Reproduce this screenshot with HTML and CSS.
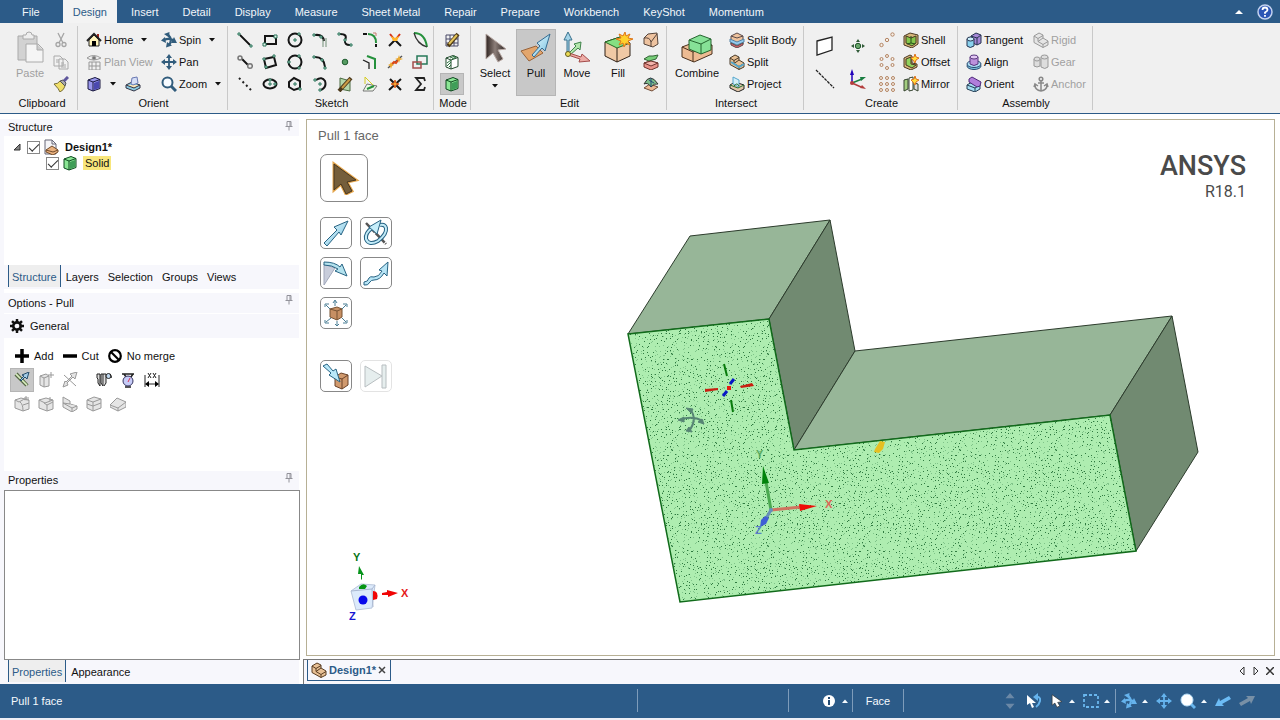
FILE: index.html
```html
<!DOCTYPE html>
<html lang="en">
<head>
<meta charset="utf-8">
<title>Design1*</title>
<link rel="stylesheet" href="styles.css">
</head>
<body>
<svg class="defs" aria-hidden="true">
  <symbol id="cube" viewBox="0 0 16 16"><path d="M2 4 9 1.500l5 2v9L7 15l-5-2z"/><path d="M2 4l5 2 7-2.500M7 6v9" fill="none"/></symbol>
  <symbol id="caret" viewBox="0 0 6 4"><path d="M0 0h6L3 3.500z"/></symbol>
  <symbol id="caret-up" viewBox="0 0 6 4"><path d="M0 4h6L3 .5z"/></symbol>
  <symbol id="pin" viewBox="0 0 8 10"><path d="M2 .5h4v5H2zM5 .5v5M.5 5.500h7M4 5.500v4" fill="none" stroke="#92929a"/></symbol>
  <symbol id="cursor" viewBox="0 0 16 20"><path d="M1 1v15l4-3 3 6 4-2-3-5 6-1z"/></symbol>
  <symbol id="spin" viewBox="0 0 16 16"><path d="M3 8q5-2.500 10 .5M7 2.500q5 5 1 11" fill="none" stroke="currentColor" stroke-width="2.200"/><path d="M0 8.500L4 5 5 11zM16 11l-6 0 3-6zM3 2L8.500 0 8 5.500zM5 15.500L6 10l5 3.500z" fill="currentColor"/></symbol>
  <symbol id="pan" viewBox="0 0 16 16"><path d="M8 2v12M2 8h12" stroke="currentColor" stroke-width="1.800"/><path d="M8 0l3 4H5zM8 16l3-4H5zM0 8l4-3v6zM16 8l-4-3v6z" fill="currentColor"/></symbol>
  <symbol id="part" viewBox="0 0 16 16"><path d="M1 4l5-3 4 2v3l5 3v4l-5 2.500-9-5z" fill="#e8c095"/><path d="M1 4l4 2.500 5-3M5 6.500v3l5 3 5-3M10 12.500v3M5 9.500l5-3.500" fill="none"/></symbol>
  <symbol id="part-plain" viewBox="0 0 16 16"><path d="M1 4l5-3 4 2v3l5 3v4l-5 2.500-9-5z"/><path d="M1 4l4 2.500 5-3M5 6.500v3l5 3 5-3M10 12.500v3M5 9.500l5-3.500" fill="none"/></symbol>
  <pattern id="stipple" width="96" height="96" patternUnits="userSpaceOnUse"><rect width="96" height="96" fill="#aeedb0"/><path id="stipple-light" fill="#7fc489" shape-rendering="crispEdges"/><path id="stipple-dark" fill="#2f7a40" shape-rendering="crispEdges"/></pattern>
  <linearGradient id="blueArrow" x1="0" y1="0" x2="1" y2="1"><stop offset="0" stop-color="#effcff"/><stop offset="1" stop-color="#70bfe0"/></linearGradient>
  <linearGradient id="darkArrow" x1="0" y1="0" x2="1" y2="0"><stop offset="0" stop-color="#302522"/><stop offset=".45" stop-color="#8b7d78"/><stop offset="1" stop-color="#29201e"/></linearGradient>
</svg>

<div class="app">
<nav class="menu" aria-label="Ribbon tabs">
  <button class="menu-file">File</button>
  <button class="menu-active">Design</button>
  <button>Insert</button><button>Detail</button><button>Display</button><button>Measure</button><button>Sheet Metal</button><button>Repair</button><button>Prepare</button><button>Workbench</button><button>KeyShot</button><button>Momentum</button>
  <div class="menu-end">
    <button class="tool" aria-label="Collapse ribbon"><svg class="i8" viewBox="0 0 8 6"><path d="M0 5 4 1l4 4z" fill="#fff"/></svg></button>
    <button class="tool" aria-label="Help"><svg class="i16" viewBox="0 0 16 16"><circle cx="8" cy="8" r="7" fill="#2b55b5" stroke="#c3d2ef" stroke-width="1.500"/><path d="M5.500 6q0-2.500 2.500-2.500T10.500 6Q10.500 7 8 8.500v1.200M8 11v1.800" fill="none" stroke="#fff" stroke-width="1.800"/></svg></button>
  </div>
</nav>

<header class="ribbon">
  <section class="group g-clipboard"><div class="cells">
    <button class="big off"><svg class="i32" viewBox="0 0 32 32"><path d="M4 5h19v24H4z" fill="#d2d2d2" stroke="#aaa"/><path d="M9 7V4h3q0-3 3-3t3 3h2v4H9z" fill="#eee" stroke="#aaa"/><path d="M12 13h12l5 5v13H12z" fill="#f5f5f5" stroke="#aaa"/><path d="M23 13v6h6" fill="#ccc" stroke="#aaa"/></svg>Paste</button>
    <button class="tool" aria-label="Cut"><svg class="i16" viewBox="0 0 16 16" fill="none" stroke="#a5a5a5" stroke-width="1.300"><path d="M5 1l5 10M11 1L6 11"/><circle cx="5" cy="12.500" r="2"/><circle cx="11" cy="12.500" r="2"/></svg></button>
    <button class="tool" aria-label="Copy"><svg class="i16" viewBox="0 0 16 16" fill="#f1f1f1" stroke="#aaa"><path d="M1 2h6l3 3v7H1zM6 5h6l3 3v7H6z"/><path d="M8 9h3M8 11h5M8 13h5M3 6h3M3 8h3"/></svg></button>
    <button class="tool" aria-label="Format painter"><svg class="i16" viewBox="0 0 16 16"><path d="M1 8q4 0 6-3l5 5q-1 4-5 6-1-3-6-8z" fill="#f0df6a" stroke="#776d38"/><path d="M7 5l3-1 3 3-1 3z" fill="#aaa" stroke="#555"/><path d="M11 5l4-4" stroke="#5f579c" stroke-width="3"/></svg></button>
  </div><h2>Clipboard</h2></section>

  <section class="group g-orient"><div class="cells">
    <button class="tool"><svg class="i16" viewBox="0 0 16 16"><path d="M11 2h2v5h-2z" fill="#9c261c"/><path d="M3 8l5-5 5 5v6H3z" fill="#fff4bb" stroke="#222"/><path d="M1 9l7-7 7 7" fill="none" stroke="#222" stroke-width="2"/><path d="M6 9h4v5H6z"/></svg>Home<svg class="caret menu-gap"><use href="#caret"/></svg></button>
    <button class="tool"><svg class="i16 navy"><use href="#spin"/></svg>Spin<svg class="caret menu-gap"><use href="#caret"/></svg></button>
    <button class="tool off"><svg class="i16" viewBox="0 0 16 16" fill="none" stroke="#999"><path d="M1 4q6-5 14 0-8 4-14 0M3 8h11v8H3zM3 12h11M6 8v8M10 8v8"/><circle cx="8" cy="4" r="1.800" fill="#777"/></svg>Plan View</button>
    <button class="tool"><svg class="i16 navy"><use href="#pan"/></svg>Pan</button>
    <div class="pair"><button class="tool" aria-label="View style"><svg class="i16 violet"><use href="#cube"/><path d="M8 7l5-2v7l-5 2z" fill="#4b49b0" stroke="none"/></svg><svg class="caret menu-gap"><use href="#caret"/></svg></button><button class="tool" aria-label="Snap view"><svg class="i16" viewBox="0 0 16 16" stroke="#334"><path d="M1 9l6-3 8 3v3l-6 3-8-3z" fill="#8bcbe2"/><path d="M1 9l8 3 6-3" fill="#fbe8b9"/><path d="M6 8l1-6 5-1 1 6-5 2z" fill="#d5def6" stroke="#6978b2"/></svg></button></div>
    <button class="tool"><svg class="i16" viewBox="0 0 16 16"><circle cx="6.500" cy="6.500" r="5" fill="#f7fbff" stroke="#315c7c" stroke-width="2"/><path d="M10 10l5 5" stroke="#315c7c" stroke-width="3"/></svg>Zoom<svg class="caret menu-gap"><use href="#caret"/></svg></button>
  </div><h2>Orient</h2></section>

  <section class="group g-sketch"><div class="cells sketch-icons">
    <button class="tool" aria-label="Line"><svg class="i16" viewBox="0 0 16 16"><path d="M3 3l10 10" stroke="#111" stroke-width="1.800"/><path class="knob" d="M1 1h2v2H1zM13 13h2v2h-2z"/></svg></button>
    <button class="tool" aria-label="Rectangle"><svg class="i16" viewBox="0 0 16 16"><path d="M3 4h11v8H3z" class="ink"/><path class="knob" d="M1 11h3v3H1zM12 3h3v3h-3z"/></svg></button>
    <button class="tool" aria-label="Circle"><svg class="i16" viewBox="0 0 16 16"><circle cx="8" cy="8" r="6.500" class="ink"/><path class="knob" d="M7 7h2v2H7zM11 1h2v2h-2z"/></svg></button>
    <button class="tool" aria-label="Tangent line"><svg class="i16" viewBox="0 0 16 16"><path class="ink" d="M3 3q8-1 9 6"/><path class="knob" d="M1 2h2v2H1zM8 4h2v2H8z"/><path d="M11 7v8M14 6v9" stroke="#739078"/></svg></button>
    <button class="tool" aria-label="Spline"><svg class="i16" viewBox="0 0 16 16"><path class="ink" d="M3 2q8 0 5 6-1 5 5 5"/><path class="knob" d="M1 1h2v2H1zM7 7h2v2H7zM13 12h2v2h-2z"/></svg></button>
    <button class="tool" aria-label="Rounded corner"><svg class="i16" viewBox="0 0 16 16"><path d="M6 2q8 0 8 9" class="green"/><path d="M1 2h4M14 12v3" class="ink"/><path d="M11 1h3v3" fill="none" stroke="#c9796a"/></svg></button>
    <button class="tool" aria-label="Trim"><svg class="i16" viewBox="0 0 16 16"><path class="ink" d="M2 14l6-6 6 6"/><path d="M3 2l4 5M13 2L9 7" stroke="#d43016" stroke-width="2"/><path d="M4 4l4 2 4-2-2 5H6z" fill="#ffb526"/></svg></button>
    <button class="tool" aria-label="Bend"><svg class="i16" viewBox="0 0 16 16"><path d="M2 1q11 0 13 14" class="green"/><path d="M2 1q3 11 13 14" fill="none" stroke="#333" stroke-width="1.300"/></svg></button>
    <button class="tool" aria-label="Construction line"><svg class="i16" viewBox="0 0 16 16"><path class="ink" d="M5 5l6 6"/><g fill="#eee" stroke="#777" stroke-width="1.500"><circle cx="3" cy="4" r="2"/><circle cx="13" cy="12" r="2.300"/></g></svg></button>
    <button class="tool" aria-label="Angled rectangle"><svg class="i16" viewBox="0 0 16 16"><path d="M2 5l10-2 2 8-10 3z" class="ink"/><path class="knob" d="M1 4h2v2H1zM11 1h2v2h-2zM3 12h2v2H3z"/></svg></button>
    <button class="tool" aria-label="Three point circle"><svg class="i16" viewBox="0 0 16 16"><circle cx="8" cy="8" r="6.500" class="ink"/><path class="knob" d="M1 7h2v2H1zM11 1h2v2h-2zM11 13h2v2h-2z"/></svg></button>
    <button class="tool" aria-label="Arc"><svg class="i16" viewBox="0 0 16 16"><path class="ink" d="M3 3q9 0 10 10"/><path class="knob" d="M1 2h2v2H1zM9 5h2v2H9zM12 13h2v2h-2z"/></svg></button>
    <button class="tool" aria-label="Point"><svg class="i16" viewBox="0 0 16 16"><circle cx="8" cy="8" r="2.800" fill="#559b62" stroke="#205c30"/></svg></button>
    <button class="tool" aria-label="Offset curve"><svg class="i16" viewBox="0 0 16 16"><path d="M5 2l8 3v10" class="green"/><path d="M1 6l6 3v6" fill="none" stroke="#222" stroke-width="1.300"/></svg></button>
    <button class="tool" aria-label="Split curve"><svg class="i16" viewBox="0 0 16 16"><path d="M1 14L15 2" stroke="#555" stroke-width="1.500"/><path d="M4 11l3-3 2 1 3-4" stroke="#e04a19" stroke-width="2" fill="none"/><path d="M12 1l1 3 3 1-3 1-1 3-1-3-3-1 3-1zM4 8l1 2 2 1-2 1-1 3-1-3-2-1 2-1z" fill="#edaa30"/></svg></button>
    <button class="tool" aria-label="Scale sketch"><svg class="i16" viewBox="0 0 16 16"><path d="M5 2h10v8H5z" fill="none" stroke="#267858" stroke-width="1.500"/><path d="M1 8h8v6H1z" fill="none" stroke="#a24e4b" stroke-width="1.500"/></svg></button>
    <button class="tool" aria-label="Dotted line"><svg class="i16" viewBox="0 0 16 16"><path d="M2 2l12 12" stroke="#222" stroke-width="2" stroke-dasharray="2 3"/></svg></button>
    <button class="tool" aria-label="Ellipse"><svg class="i16" viewBox="0 0 16 16"><ellipse class="ink" cx="8" cy="8" rx="6.500" ry="4.500"/><path class="knob" d="M7 7h2v2H7zM7 3h2v2H7zM12 7h2v2h-2z"/></svg></button>
    <button class="tool" aria-label="Polygon"><svg class="i16" viewBox="0 0 16 16"><path class="ink" d="M2 6l5-4 6 3v7l-6 2-5-3z"/><path class="knob" d="M7 7h2v2H7zM12 12h2v2h-2z"/></svg></button>
    <button class="tool" aria-label="Swept arc"><svg class="i16" viewBox="0 0 16 16"><path class="ink" d="M4 4q6-4 9 1 2 6-4 9"/><path class="knob" d="M2 3h2v2H2zM7 7h2v2H7zM7 13h2v2H7z"/></svg></button>
    <button class="tool" aria-label="Face curve"><svg class="i16" viewBox="0 0 16 16"><path d="M3 2l10 3v10L3 13z" fill="#b4d6a8" stroke="#4b6b42"/><path d="M2 15L14 2" stroke="#4c391b" stroke-width="4"/><path d="M5 12l8-9" stroke="#c99b45" stroke-width="2"/></svg></button>
    <button class="tool" aria-label="Project to sketch"><svg class="i16" viewBox="0 0 16 16"><path d="M1 15l4-7 10 2-4 5z" fill="#eef7e7" stroke="#777"/><path d="M5 13l7-3" class="green"/><path d="M3 1v7M3 1l8 8" stroke="#d5cc22" fill="none"/></svg></button>
    <button class="tool" aria-label="Intersect curve"><svg class="i16" viewBox="0 0 16 16"><path class="ink" d="M2 14L14 3M3 3l11 11"/><path d="M8 4l1 3 3 1-3 1-1 3-1-3-3-1 3-1z" fill="#f7ab31" stroke="#d95f22"/></svg></button>
    <button class="tool" aria-label="Equation"><svg class="i16" viewBox="0 0 16 16"><path d="M13 5l-1-3H4l5 6-5 6h8l1-3" fill="none" stroke="#222" stroke-width="1.800"/></svg></button>
  </div><h2>Sketch</h2></section>

  <section class="group g-mode"><div class="cells">
    <button class="tool mode" aria-label="Sketch mode"><svg class="i16" viewBox="0 0 16 16"><path d="M2 3h12v11H2zM2 7h12M2 11h12M6 3v11M10 3v11" fill="none" stroke="#484867"/><path d="M4 14L14 2" stroke="#503b15" stroke-width="4"/><path d="M5 12l8-9" stroke="#e4c45b" stroke-width="2"/></svg></button>
    <button class="tool mode" aria-label="Section mode"><svg class="i16 white"><use href="#cube"/><path d="M3 9l4-3M3 12l4-4M5 13l2-2M6 4l5-2M8 5l4-2" stroke="#27733a"/></svg></button>
    <button class="tool mode pressed" aria-label="3D mode"><svg class="i16 lime"><use href="#cube"/><path d="M8 7l5-2v7l-5 2z" fill="#3f9e58" stroke="none"/></svg></button>
  </div><h2>Mode</h2></section>

  <section class="group g-edit"><div class="cells">
    <button class="big"><svg class="i32" viewBox="0 0 32 32"><path d="M7 3v25l7-6 5 9 5-3-5-9 8-1z" fill="url(#darkArrow)" stroke="#b8a9a4"/></svg>Select<svg class="caret"><use href="#caret"/></svg></button>
    <button class="big pressed"><svg class="i32" viewBox="0 0 32 32"><path d="M1 20l15-5 7 7-14 8z" fill="#e3a66d" stroke="#98633a"/><path d="M12 24l8-9-3-3L30 3l-5 17-3-3-8 9z" fill="url(#blueArrow)" stroke="#356b91"/></svg>Pull</button>
    <button class="big"><svg class="i32" viewBox="0 0 32 32"><path d="M6 22V9H3l4-8 4 8H8v13z" fill="#a4d4e8" stroke="#3a718d"/><path d="M8 22l7-7-2-2 7-2-1 8-2-2-8 7z" fill="#b4e7ad" stroke="#40834a"/><path d="M8 22l12 4 1-3 8 7-11 1 1-3-12-4z" fill="#edaca6" stroke="#a44d4c"/><circle cx="7" cy="23" r="2.500" fill="#eddd56" stroke="#635b20"/></svg>Move</button>
    <button class="big"><svg class="i32" viewBox="0 0 32 32"><path d="M3 11l15-5 10 6v13l-13 6-12-6z" fill="#f0c9a5" stroke="#2f2117"/><path d="M3 11l15-5 10 6-13 5z" fill="#85df82" stroke="#276a27"/><path d="M15 17v14" stroke="#2f2117"/><path d="M23 1l1 4 4-2-2 4 5 1-5 2 2 4-4-2-2 4-1-4-4 2 2-4-5-2 5-1-2-4 4 2z" fill="#ffd02b" stroke="#df7518"/></svg>Fill</button>
    <div class="stack"><button class="tool" aria-label="Blend"><svg class="i16" viewBox="0 0 16 16"><path d="M1 6l4-4 9-1 1 11-5 3-9-3z" fill="#eec3a0" stroke="#55443a"/><path d="M1 6q6-1 7 4l6-8M8 10v5" fill="none" stroke="#55443a"/></svg></button><button class="tool" aria-label="Replace"><svg class="i16" viewBox="0 0 16 16"><path d="M1 9l6-2 8 2v4l-7 3-7-3z" fill="#e89189" stroke="#70342e"/><path d="M1 5l5-3h4l5-1-2 4-7 2z" fill="#76ce78" stroke="#356337"/><path d="M1 9l7 3 7-3-7-2z" fill="#f3b3ac" stroke="#70342e"/></svg></button><button class="tool" aria-label="Tweak"><svg class="i16" viewBox="0 0 16 16"><path d="M1 12l6-4 8 3-6 4z" fill="#eeb995" stroke="#704d38"/><path d="M1 8q6-12 14 0-4-1-7 3-3-5-7-3" fill="#7dbd8b" stroke="#333"/><path d="M8 2v9M6 4l5 3" stroke="#234a76"/></svg></button></div>
  </div><h2>Edit</h2></section>

  <section class="group g-intersect"><div class="cells">
    <button class="big"><svg class="i32" viewBox="0 0 32 32" stroke="#49301d"><path d="M1 16l8-3 22 1v9l-18 8-12-5z" fill="#edbb93"/><path d="M1 16l11 5 19-7M12 21v10" fill="none"/><path d="M8 9l11-5 11 4v11l-10 4-12-5z" fill="#86e197" stroke="#25652f"/><path d="M8 9l12 4 10-5M20 13v10" fill="none" stroke="#25652f"/></svg>Combine</button>
    <div class="stack"><button class="tool"><svg class="i16" viewBox="0 0 16 16" stroke="#5a4b4b"><path d="M2 4l6-3 6 3v8l-6 3-6-3z" fill="#eec29c"/><path d="M1 7l7 3 7-3v3l-7 3-7-3z" fill="#92cbee" stroke="#5481a3"/><path d="M2 11l6 3 6-3v2l-6 3-6-3z" fill="#e8616e"/><path d="M2 4l6 2 6-2" fill="none"/></svg>Split Body</button>
    <button class="tool"><svg class="i16"><use href="#part" stroke="#493b29"/><path d="M2 8l8 5 5-3" fill="none" stroke="#55a7cc" stroke-width="2"/></svg>Split</button>
    <button class="tool"><svg class="i16" viewBox="0 0 16 16" stroke="#222"><path d="M1 9l5-3 9 3v4l-6 3-8-4z" fill="#e1c5a8"/><path d="M4 1l6 3v7l-6-3z" fill="#d3effa" stroke="#55a6cc"/><path d="M1 9l8 3 6-3M5 10q3-4 5 0" fill="none" stroke="#257233"/></svg>Project</button></div>
  </div><h2>Intersect</h2></section>

  <section class="group g-create"><div class="cells">
    <div class="stack two"><button class="tool" aria-label="Plane"><svg class="i20" viewBox="0 0 20 20"><path d="M2 5l15-4v13L2 19z" fill="#fff" stroke="#222" stroke-width="1.300"/></svg></button><button class="tool" aria-label="Axis"><svg class="i20" viewBox="0 0 20 20"><path d="M1 1l18 18" stroke="#222" stroke-width="1.300" stroke-dasharray="3 1"/></svg></button></div>
    <div class="stack two"><button class="tool" aria-label="Point"><svg class="i16" viewBox="0 0 16 16"><circle cx="8" cy="8" r="2.700" fill="#69a76b" stroke="#20552a"/><path d="M8 1l2 3H6zM8 15l2-3H6zM1 8l3-2v4zM15 8l-3-2v4z" fill="#315b38"/></svg></button><button class="tool" aria-label="Origin"><svg class="i20" viewBox="0 0 20 20"><path d="M4 14V3" stroke="#20b" stroke-width="1.500"/><path d="M4 0l2 6H2z" fill="#20b"/><path d="M4 14l10-4" stroke="#187d40" stroke-width="1.500"/><path d="M18 8l-5 4-1-4z" fill="#187d40"/><path d="M4 14l9 4" stroke="#b33c3c" stroke-width="1.500"/><path d="M18 20l-6-1 2-3z" fill="#b33c3c"/><circle cx="4" cy="14" r="2" fill="#b33c3c"/></svg></button></div>
    <div class="stack pattern"><button class="tool" aria-label="Linear pattern"><svg class="i16" viewBox="0 0 16 16"><circle cx="2.500" cy="13" r="1.700"/><circle cx="8" cy="8" r="1.700"/><circle cx="13.500" cy="2.500" r="1.700"/></svg></button><button class="tool" aria-label="Circular pattern"><svg class="i16" viewBox="0 0 16 16"><circle cx="8" cy="2" r="1.500"/><circle cx="13.500" cy="5" r="1.500"/><circle cx="13.500" cy="11" r="1.500"/><circle cx="8" cy="14" r="1.500"/><circle cx="2.500" cy="11" r="1.500"/><circle cx="2.500" cy="5" r="1.500"/></svg></button><button class="tool" aria-label="Fill pattern"><svg class="i16" viewBox="0 0 16 16"><circle cx="2" cy="2" r="1.500"/><circle cx="8" cy="2" r="1.500"/><circle cx="14" cy="2" r="1.500"/><circle cx="2" cy="8" r="1.500"/><circle cx="8" cy="8" r="1.500"/><circle cx="14" cy="8" r="1.500"/><circle cx="2" cy="14" r="1.500"/><circle cx="8" cy="14" r="1.500"/><circle cx="14" cy="14" r="1.500"/></svg></button></div>
    <div class="stack"><button class="tool"><svg class="i16" viewBox="0 0 16 16" stroke="#4a3922"><path d="M1 4l6-3 8 2v9l-6 4-8-3z" fill="#d7b77b"/><path d="M3 4l5 2 5-2v7l-4 3-6-3z" fill="#84c74b"/><path d="M8 4v7l-4 1M8 11l4 1" fill="none" stroke="#244f19"/></svg>Shell</button>
    <button class="tool"><svg class="i16" viewBox="0 0 16 16" stroke="#4a3922"><path d="M1 4l6-3 2 1v7l5 1v3l-6 3-7-3z" fill="#d7b77b"/><path d="M3 5l5-2v7l5 1-4 3-6-3z" fill="#91d25d"/><path d="M12 0l1 3 3 1-3 2-1 3-2-3-2-2 3-1z" fill="#ffdf3d" stroke="#df721c"/></svg>Offset</button>
    <button class="tool"><svg class="i16" viewBox="0 0 16 16" stroke="#34432e"><path d="M1 4l4-1v10l-4 2z" fill="#a3cd80"/><path d="M6 2l4-1v13l-4 1z" fill="#fff"/><path d="M11 7l4 1v7l-4-2z" fill="#ddd"/><path d="M12 0l1 3 3 1-3 2-1 3-2-3-2-2 3-1z" fill="#ffdf3d" stroke="#df721c"/></svg>Mirror</button></div>
  </div><h2>Create</h2></section>

  <section class="group g-assembly"><div class="cells">
    <button class="tool"><svg class="i16" viewBox="0 0 16 16" stroke="#263551"><path d="M5 4l5-3 5 2v8l-4 2-6-3z" fill="#a486d5"/><path d="M5 4l6 2 4-3M11 6v7" fill="none"/><path d="M1 7v7q3 3 7 0V7z" fill="#8ad2ee"/><ellipse cx="4.500" cy="7" rx="3.500" ry="2" fill="#c9edf9"/></svg>Tangent</button>
    <button class="tool off"><svg class="i16 gray"><use href="#part-plain"/></svg>Rigid</button>
    <button class="tool"><svg class="i16" viewBox="0 0 16 16" stroke="#264a70"><ellipse cx="8" cy="12" rx="7" ry="3.500" fill="#7fc5e1"/><ellipse cx="8" cy="10" rx="7" ry="3.500" fill="#acdff4"/><path d="M4 3v7q4 3 8 0V3z" fill="#bc91dc" stroke="#58377e"/><ellipse cx="8" cy="3" rx="4" ry="2" fill="#e2c7f3" stroke="#58377e"/></svg>Align</button>
    <button class="tool off"><svg class="i16" viewBox="0 0 16 16" fill="#ddd" stroke="#999"><path d="M1 5v7q3 2 6 0V5z"/><ellipse cx="4" cy="5" rx="3" ry="2"/><path d="M8 3v10q4 3 7 0V3z"/><ellipse cx="11.500" cy="3" rx="3.500" ry="2"/></svg>Gear</button>
    <button class="tool"><svg class="i16" viewBox="0 0 16 16" stroke="#263f55"><path d="M1 9l5-3 8 3v4l-5 3-8-3z" fill="#a4ddf2"/><path d="M1 9l8 3 5-3M9 12v4" fill="none"/><path d="M3 3l3-2 9 5-1 4-3 1-8-5z" fill="#b17edb" stroke="#4d2879"/></svg>Orient</button>
    <button class="tool off"><svg class="i16" viewBox="0 0 16 16" fill="none" stroke="#888" stroke-width="1.500"><circle cx="8" cy="3" r="1.800"/><path d="M8 5v10M5 7h6M2 9q0 5 6 6 6-1 6-6M1 11l1-3 3 2M15 11l-1-3-3 2"/></svg>Anchor</button>
  </div><h2>Assembly</h2></section>
</header>

<div class="work">
<aside class="side">
  <section class="panel p-structure">
    <h3>Structure<svg class="pin"><use href="#pin"/></svg></h3>
    <div class="tree">
      <div class="node"><svg class="i8" viewBox="0 0 8 8"><path d="M7 1v6H1z" fill="#888" stroke="#333"/></svg><input type="checkbox" id="n1" checked><svg class="i16" viewBox="0 0 16 16"><path d="M2 1h7l4 4v10H2z" fill="#f5f5f8" stroke="#667"/><path d="M9 1v4h4" fill="none" stroke="#667"/><path d="M3 11l6-4 6 4v2l-5 3-7-3z" fill="#eab17e" stroke="#704b2b"/><path d="M3 11l7 2 5-2" fill="none" stroke="#704b2b"/></svg><label for="n1"><b>Design1*</b></label></div>
      <div class="node child"><input type="checkbox" id="n2" checked><svg class="i16 lime"><use href="#cube"/><path d="M8 7l5-2v7l-5 2z" fill="#3f9e58" stroke="none"/></svg><label for="n2" class="marked">Solid</label></div>
    </div>
    <div class="tabs"><button class="on">Structure</button><button>Layers</button><button>Selection</button><button>Groups</button><button>Views</button></div>
  </section>
  <section class="panel p-options">
    <h3>Options - Pull<svg class="pin"><use href="#pin"/></svg></h3>
    <h4><svg class="i14" viewBox="0 0 16 16"><circle cx="8" cy="8" r="4.200" fill="none" stroke="#111" stroke-width="3"/><path d="M8 0v4M8 12v4M0 8h4M12 8h4M2.300 2.300l3 3M10.700 10.700l3 3M13.700 2.300l-3 3M5.300 10.700l-3 3" stroke="#111" stroke-width="2.800"/></svg>General</h4>
    <div class="options">
      <div class="row merge">
        <button class="tool"><svg class="i14" viewBox="0 0 14 14"><path d="M7 0v14M0 7h14" stroke="#000" stroke-width="3.500"/></svg>Add</button>
        <button class="tool"><svg class="i14" viewBox="0 0 14 14"><path d="M0 7h14" stroke="#000" stroke-width="3.500"/></svg>Cut</button>
        <button class="tool"><svg class="i14" viewBox="0 0 14 14"><circle cx="7" cy="7" r="5.800" fill="none" stroke="#000" stroke-width="2.200"/><path d="M3 3l8 8" stroke="#000" stroke-width="2.200"/></svg>No merge</button>
      </div>
      <div class="row small">
        <button class="tool pressed" aria-label="Maintain offset"><svg class="i16" viewBox="0 0 16 16"><path d="M1 3l11 11M3 1l11 12" stroke="#586b45" stroke-width="1.500"/><path d="M2 2l11 11" stroke="#d8efbd" stroke-width="1.500"/><path d="M15 0l-2 7-2-2-4 4-1-1 4-4-2-1z" fill="#a5cde8" stroke="#234c6b"/></svg></button>
        <button class="tool" aria-label="Thicken"><svg class="i16 gray" viewBox="0 0 16 16"><path d="M2 4l6-2 3 2v10l-5 1-4-2z"/><path d="M2 4l4 2 5-2M6 6v9M13 0v6M10 3h6"/></svg></button>
        <button class="tool" aria-label="Both directions"><svg class="i16 gray" viewBox="0 0 16 16"><path d="M15 0l-2 7-2-2-6 6 1 2-5 2 2-6 1 1 6-6-2-2z"/><path d="M2 3l12 11"/></svg></button>
        <button class="tool spaced" aria-label="Caliper"><svg class="i16" viewBox="0 0 16 16" fill="#ddd" stroke="#222"><path d="M1 2h3v12l-2-3V7L1 6zM5 2h2v12l-2-3zM7 2h3v9l-2 3"/><circle cx="12.500" cy="4" r="2.500" fill="#c0d8ef"/><path d="M14 2l2 4"/></svg></button>
        <button class="tool" aria-label="Gauge"><svg class="i16" viewBox="0 0 16 16"><path d="M2 2h12M4 2l2 3h5l2-3M5 15h6" stroke="#222" fill="none" stroke-width="1.500"/><circle cx="8" cy="9" r="5" fill="#c7ccf8" stroke="#35345f"/><path d="M8 10l2-4" stroke="#e03355"/></svg></button>
        <button class="tool" aria-label="Ruler dimension"><svg class="i16" viewBox="0 0 16 16"><path d="M1 3v12M15 3v12M3 12h10M4 1l3 5M7 1L4 6M9 1l3 5M12 1L9 6" stroke="#222"/><path d="M1 12l4-3v6zM15 12l-4-3v6z"/></svg></button>
      </div>
      <div class="row small">
        <button class="tool" aria-label="Round"><svg class="i16 gray" viewBox="0 0 16 16"><path d="M1 4l6-2 8 2v9l-6 2-8-3z"/><path d="M1 4l4 2q4-4 10-2M6 6q3 2 3 9M12 0v4M10 2h5M9 9l6-2"/></svg></button>
        <button class="tool" aria-label="Variable round"><svg class="i16 gray" viewBox="0 0 16 16"><path d="M1 4l7-2 7 2v9l-6 2-8-3z"/><path d="M1 4l6 3 8-3M6 7l3 2v6M9 9l6-3M12 1v4"/></svg></button>
        <button class="tool" aria-label="Chamfer"><svg class="i16 gray" viewBox="0 0 16 16"><path d="M1 1l7 4v3l7 2v3l-5 3-9-5z"/><path d="M1 7l9 5 5-2M10 12v4M1 7l7 1"/></svg></button>
        <button class="tool" aria-label="Extrude"><svg class="i16 gray" viewBox="0 0 16 16"><path d="M1 4l7-3 7 2v9l-8 3-6-3z"/><path d="M1 4l6 2 8-3M7 6v9M1 8l6 2 8-3"/></svg></button>
        <button class="tool" aria-label="Pivot"><svg class="i16 gray" viewBox="0 0 16 16"><path d="M0 9l7-7 9 4v5l-8 4-8-4z"/><path d="M0 9l8 3 8-6M8 12v3"/></svg></button>
      </div>
    </div>
  </section>
  <section class="panel p-properties">
    <h3>Properties<svg class="pin"><use href="#pin"/></svg></h3>
    <div class="sheet"></div>
    <div class="tabs"><button class="on">Properties</button><button>Appearance</button></div>
  </section>
</aside>

<main class="stage">
  <div class="viewport">
    <svg class="scene" viewBox="307 120 967 535" role="img" aria-label="L-shaped solid, front face selected">
      <g stroke="#2c3b2c" stroke-linejoin="round">
        <path d="M628 334l62-98 140-16-61 99z" fill="#97b698"/>
        <path d="M769 319l61-99 25 131-61 99z" fill="#718a71"/>
        <path d="M794 450l61-99 317-35-62 99z" fill="#97b698"/>
        <path d="M1110 415l62-99 26 136-62 99z" fill="#718a71"/>
      </g>
      <path d="M628 334l141-15 25 131 316-35 26 136-456 51z" fill="url(#stipple)" stroke="#116b1b" stroke-width="1.500"/>
      <path d="M705 389l13-1v2l-13 2zM740 386l12-3 2 3-13 2z" fill="#c91e10"/>
      <path d="M724 364l3 12M731 400l2 12" stroke="#087b0b" stroke-width="2"/>
      <path d="M730 384l4-5M727 391l-4 5" stroke="#0718c4" stroke-width="3"/>
      <path d="M727 386h4v4h-4z" fill="#e51b12"/>
      <g stroke="#578574" stroke-width="2" fill="none"><path d="M680 420q12-5 23 1M690 409q8 10-1 22"/><path d="M678 420l6-3v5zM704 424l-6-2 4-3zM686 408l7 1-2 4zM686 431l3-4 3 5z" fill="#578574" stroke-width="1"/></g>
      <path d="M875 449l5-8 5 1-2 7-4 4-5-1z" fill="#e5bf22"/>
      <path d="M771 510l-5-28" stroke="#4ba950" stroke-width="3"/><path d="M763 466l6 17-7 1z" fill="#00820a"/>
      <path d="M771 510l30-3" stroke="#d07360" stroke-width="3"/><path d="M799 504l18 2-17 5z" fill="#ee0d06"/>
      <path d="M771 510l-6 10" stroke="#668fb9" stroke-width="3"/><path d="M765 516l4 2-3 6-6 3 1-7z" fill="#405fd5"/><circle cx="771" cy="510" r="2" fill="#668fb9"/>
      <g class="axis"><text x="756" y="458" fill="#58a85c">Y</text><text x="825" y="508" fill="#db6758">X</text><text x="755" y="534" fill="#587fcb">Z</text></g>
      <path d="M351 591l10-7 14 1-3 23-16 2z" fill="#dceafb" stroke="#b9c6db"/><path d="M351 591l21-2 3-4M372 589l1 18" fill="none" stroke="#aab8d2"/>
      <path d="M359 587q4-5 8-1l-2 3h-6z" fill="#079514"/><circle cx="363" cy="600" r="4.500" fill="#0707eb"/><path d="M373 591q6 0 4 8l-4 1z" fill="#f00404"/>
      <path d="M361 579v-5h-3l1-8 5 9h-2v5z" fill="#07941b"/><path d="M382 593l5-1v-2l11 3-10 4v-2h-6z" fill="#f00404"/>
      <g class="axis"><text x="353" y="561" fill="#087516">Y</text><text x="401" y="597" fill="#e51919">X</text><text x="349" y="620" fill="#1717d2">Z</text></g>
    </svg>
    <div class="guides">
      <p>Pull 1 face</p>
      <button class="guide large" aria-label="Select"><svg viewBox="0 0 32 32"><path d="M6 2v26l7-6 5 10 6-3-5-9 9-2z" fill="#755e3b" stroke="#e5a64c" stroke-width="3"/><path d="M6 2v26l7-6 5 10 6-3-5-9 9-2z" fill="#755e3b" stroke="#46351f"/></svg></button>
      <div class="guide-grid">
        <button class="guide" aria-label="Direction"><svg viewBox="0 0 28 28"><path d="M2 24l13-13-3-3L26 2l-7 14-2-3L5 27z" fill="url(#blueArrow)" stroke="#286484"/></svg></button>
        <button class="guide" aria-label="Revolve"><svg viewBox="0 0 28 28"><path d="M4 4l20 21" stroke="#555" stroke-width="2.500" stroke-dasharray="6 1"/><path d="M10 9Q3 14 4 20q3 7 12 2Q25 15 24 9q-1-4-6-3" fill="none" stroke="#286484" stroke-width="4"/><path d="M10 9Q3 14 4 20q3 7 12 2Q25 15 24 9q-1-4-6-3" fill="none" stroke="#c2ebf8" stroke-width="2"/><path d="M19 1L7 8l8 7z" fill="#c6eefa" stroke="#286484"/></svg></button>
        <button class="guide" aria-label="Draft"><svg viewBox="0 0 28 28"><path d="M2 5v21L13 9z" fill="#c8cddb" stroke="#a1a8bb"/><path d="M2 3q11 0 16 5l2-3 5 12-12-5 3-2Q10 6 2 6z" fill="#b4e2ee" stroke="#286484"/></svg></button>
        <button class="guide" aria-label="Sweep"><svg viewBox="0 0 28 28"><path d="M2 23q4 0 5-4 1-2 5-1 5 0 8-6l-3-1L26 3l-1 14-3-3q-4 7-10 7-3 0-4 2-2 4-6 3z" fill="#b8e5f6" stroke="#286484"/></svg></button>
        <button class="guide" aria-label="Scale body"><svg viewBox="0 0 28 28"><path d="M4 6l4 4M24 6l-4 4M4 23l5-4M24 23l-4-4M13 7V2M15 27v-5M11 4l2-3 2 3M13 25l2 2 2-2M3 8V5h4M21 5h4v3M3 21v3h4M21 24h4v-3" stroke="#4a7e95" fill="none"/><path d="M8 10l7-2 5 2v8l-5 3-7-3z" fill="#c79064" stroke="#775333"/><path d="M8 10l7 2 5-2M15 12v9" fill="none" stroke="#775333"/></svg></button>
      </div>
      <div class="guide-grid last">
        <button class="guide" aria-label="Up to"><svg viewBox="0 0 28 28"><path d="M13 15l6-4 7 2v10l-6 4-7-3z" fill="#d19a6e" stroke="#6b4329"/><path d="M13 15l7 2 6-4M20 17v10" fill="none" stroke="#6b4329"/><path d="M1 4l4-2 6 7 3-2 4 13-11-7 2-2z" fill="#b9e8f9" stroke="#286484"/></svg></button>
        <button class="guide faded" aria-label="Full pull"><svg viewBox="0 0 28 28" fill="#e0eaea" stroke="#a7afb2"><path d="M3 4v21l17-11zM20 3h4v23h-4V14z"/></svg></button>
      </div>
    </div>
    <div class="brand"><strong>ANSYS</strong><span>R18.1</span></div>
  </div>
  <div class="docs">
    <div class="doc"><svg class="i16"><use href="#part" stroke="#583c22"/></svg><button class="tool doc-name">Design1*</button><button class="tool" aria-label="Close document"><svg class="i8" viewBox="0 0 8 8"><path d="M1 1l6 6M7 1L1 7" stroke="#444" stroke-width="1.500"/></svg></button></div>
    <div class="doc-nav"><button class="tool" aria-label="Previous"><svg class="i8" viewBox="0 0 8 8"><path d="M6 0v8L2 4z" fill="none" stroke="#333"/></svg></button><button class="tool" aria-label="Next"><svg class="i8" viewBox="0 0 8 8"><path d="M2 0v8l4-4z" fill="none" stroke="#333"/></svg></button><button class="tool" aria-label="Close"><svg class="i8" viewBox="0 0 8 8"><path d="M0 0l8 8M8 0L0 8" stroke="#333" stroke-width="1.500"/></svg></button></div>
  </div>
</main>
</div>

<footer class="status">
  <div class="message">Pull 1 face</div><div class="blank"></div>
  <div class="info"><button class="tool" aria-label="Messages"><svg class="i14" viewBox="0 0 14 14"><circle cx="7" cy="7" r="6" fill="#fff"/><path d="M7 6v5M7 3v2" stroke="#244b73" stroke-width="2"/></svg><svg class="caret"><use href="#caret-up"/></svg></button></div>
  <div class="kind">Face</div>
  <div class="view-tools">
    <button class="tool" aria-label="Step"><svg class="i16 dim" viewBox="0 0 16 20"><path d="M3 7l5-6 5 6zM3 13l5 6 5-6z"/></svg></button>
    <button class="tool" aria-label="Undo selection"><svg class="i16" viewBox="0 0 16 16"><path d="M9 4q6-1 5 4-1 4-4 6" fill="none" stroke="#65b3ed" stroke-width="2"/><path d="M7 4l5-4v8z" fill="#65b3ed"/><path d="M1 2v10l3-2 2 5 2-1-2-4h4z" fill="#fff"/></svg></button>
    <button class="tool" aria-label="Selection mode"><svg class="i14 light"><use href="#cursor"/></svg><svg class="caret"><use href="#caret-up"/></svg></button>
    <button class="tool" aria-label="Box select"><svg class="i16" viewBox="0 0 16 16"><path d="M1 2h14v12H1z" fill="none" stroke="#69b6ed" stroke-width="1.800" stroke-dasharray="3 2"/></svg><svg class="caret"><use href="#caret-up"/></svg></button>
    <span class="rule"></span>
    <button class="tool" aria-label="Spin"><svg class="i16 sky"><use href="#spin"/></svg><svg class="caret"><use href="#caret-up"/></svg></button>
    <button class="tool" aria-label="Pan"><svg class="i16 sky"><use href="#pan"/></svg></button>
    <button class="tool" aria-label="Zoom"><svg class="i16" viewBox="0 0 16 16"><path d="M9 9l6 6" stroke="#69b6ed" stroke-width="3"/><circle cx="7" cy="7" r="6" fill="#fff" stroke="#b4dcf7"/></svg><svg class="caret"><use href="#caret-up"/></svg></button>
    <button class="tool" aria-label="Previous view"><svg class="i16" viewBox="0 0 16 16"><path d="M0 13l4-8 1 3 9-5 2 3-9 5 2 2z" fill="#6cbcf5"/></svg></button>
    <button class="tool" aria-label="Next view"><svg class="i16" viewBox="0 0 16 16"><path d="M16 3l-4 8-1-3-9 5-2-3 9-5-2-2z" fill="#7890a6"/></svg></button>
  </div>
</footer>
</div>
<script src="scene.js"></script>
</body>
</html>
```
FILE: styles.css
```css
* { box-sizing: border-box; }
body { margin: 0; font: 11px/16px "Liberation Sans", Arial, sans-serif; color: #111; background: #f7f7fc; }
h2, h3, h4, p { margin: 0; font-size: 11px; font-weight: 400; }
button { margin: 0; padding: 0; border: 0; background: none; font: inherit; color: inherit; }
svg { display: block; flex: none; }
.defs { position: absolute; width: 0; height: 0; }
.app { display: flex; flex-direction: column; min-height: 100vh; }

.i8 { width: 8px; height: 8px; }
.i14 { width: 14px; height: 14px; }
.i16 { width: 16px; height: 16px; }
.i20 { width: 20px; height: 20px; }
.i32 { width: 32px; height: 32px; }
.caret { width: 6px; height: 4px; fill: currentColor; }
.menu-gap { margin-left: 6px; }
.pin { width: 8px; height: 10px; }
.navy { color: #315c7c; }
.sky { color: #65b3ed; }
.violet { fill: #9a98ed; stroke: #1a1941; }
.lime { fill: #8be695; stroke: #0e4b20; }
.white { fill: #fff; stroke: #214a2c; }
.gray { fill: #e5e5e5; stroke: #999; }
.light { fill: #fff; stroke: #333; }
.dim { fill: #6b88a6; }
.ink { fill: none; stroke: #151515; stroke-width: 2px; }
.green { fill: none; stroke: #25913c; stroke-width: 2px; }
.knob { fill: #e8f5ec; stroke: #28745a; }
.tool { display: flex; align-items: center; gap: 2px; white-space: nowrap; }
.off { color: #a0a0a0; }
.pressed { background: #c8c8c8; outline: 1px solid #b5b5b5; outline-offset: -1px; }

.menu { display: flex; gap: 4px; height: 23px; background: #2c5b88; color: #f2f6fa; }
.menu > button { padding: 0 10px; }
.menu > .menu-file { padding: 0 22px; margin-right: -3px; }
.menu > .menu-active { background: #f3f3f3; color: #2c5b88; }
.menu-end { display: flex; gap: 14px; margin-left: auto; padding-right: 7px; }

.ribbon { display: flex; height: 91px; padding-top: 3px; background: #f0f0f0; border-bottom: 1px solid #2c5b88; }
.group { display: flex; flex-direction: column; flex: none; height: 84px; padding-top: 3px; border-right: 1px solid #c9c9c9; }
.group h2 { padding-left: 2px; text-align: center; line-height: 17px; }
.cells { display: grid; grid-template-rows: repeat(3, 22px); grid-auto-flow: row; }
.big { grid-row: 1 / 4; display: flex; flex-direction: column; align-items: center; gap: 4px; height: 67px; padding-top: 2px; line-height: 13px; }
.stack { grid-row: 1 / 4; display: grid; grid-template-rows: repeat(3, 22px); }
.two { grid-template-rows: repeat(2, 33px); justify-items: center; }
.pair { display: flex; gap: 9px; }
.g-clipboard { width: 78px; padding-left: 7px; }
.g-clipboard .cells { grid-template-columns: 46px 16px; }
.g-clipboard .cells .tool { grid-column: 2; }
.g-clipboard h2 { padding: 0; }
.g-orient { width: 150px; }
.g-orient .cells { grid-template-columns: 75px 66px; padding-left: 8px; }
.g-sketch { width: 206px; }
.sketch-icons { grid-template-columns: repeat(8, 25px); padding-left: 4px; justify-items: center; }
.g-mode { width: 37px; }
.mode { width: 24px; justify-content: center; justify-self: center; }
.g-edit { width: 196px; }
.g-edit .cells { grid-template-columns: repeat(4, 40px) 24px; gap: 0 1px; padding-left: 4px; }
.g-edit .stack { justify-items: center; }
.g-intersect { width: 137px; }
.g-intersect .cells { grid-template-columns: 52px 74px; gap: 0 6px; padding-left: 4px; }
.g-create { width: 154px; }
.g-create .cells { grid-template-columns: 33px 33px 25px 58px; padding-left: 4px; }
.g-create .stack:last-child { padding-left: 4px; }
.g-assembly { width: 135px; }
.g-assembly .cells { grid-template-columns: 67px 60px; padding-left: 8px; }
.pattern { justify-items: center; fill: #f6f0e9; stroke: #b38463; }

.work { display: flex; flex: 1; padding-top: 5px; background: #fff; }
.side { display: flex; flex-direction: column; width: 300px; border-left: 4px solid #f7f7fc; }
.panel { display: flex; flex-direction: column; }
.panel h3 { display: flex; justify-content: space-between; margin-right: 1px; padding: 0 6px 0 4px; background: #f7f7fc; line-height: 17px; }
.panel h3 .pin { margin-top: 2px; }
.p-structure { height: 170px; }
.tree { flex: 1; padding-top: 3px; }
.node { display: flex; align-items: center; height: 16px; padding-left: 9px; }
.node .i8 { margin-right: 6px; }
.node .i16 { margin: 0 5px 0 3px; }
.node.child { padding-left: 42px; }
.node input { appearance: none; width: 13px; height: 13px; margin: 0; border: 1px solid #888; background: #fff; display: grid; place-items: center; }
.node input:checked::before { content: ""; width: 9px; height: 4px; border: solid #333; border-width: 0 0 1px 1px; transform: translateY(-1px) rotate(-45deg); }
.node label { line-height: 14px; }
.node b { padding-left: 1px; }
.marked { padding: 0 2px; background: #f8e67b; }
.tabs { display: flex; gap: 1px; height: 24px; margin-right: 1px; padding: 0 4px; background: #f7f7fc; }
.tabs button { height: 22px; padding: 1px 4px 0; }
.tabs .on { padding: 1px 3px 0; background: #eee; border: solid #2c5b88; border-width: 0 1px; color: #2c5b88; }
.p-options { height: 182px; padding-top: 4px; }
.p-options h3 { line-height: 20px; }
.panel h4 { display: flex; align-items: center; gap: 6px; height: 24px; margin: 1px 1px 0 0; padding-left: 6px; background: #f7f7fc; }
.options { padding: 6px; }
.row { display: flex; align-items: center; height: 24px; }
.merge { gap: 9px; padding-left: 5px; }
.merge .tool { gap: 5px; }
.small .tool { width: 24px; height: 24px; justify-content: center; }
.small .spaced { margin-left: 10px; }
.p-properties { flex: 1; }
.p-properties h3 { line-height: 19px; }
.sheet { flex: 1; background: #fff; border: 1px solid #888; }

.stage { display: flex; flex: 1; flex-direction: column; min-width: 0; }
.viewport { position: relative; flex: 1; margin: 0 5px 3px 6px; border: 1px solid #b7b095; background: #fff; }
.scene { width: 100%; height: 100%; position: absolute; inset: 0; }
.axis { font: bold 11px "Liberation Sans", Arial, sans-serif; }
.guides { position: absolute; left: 13px; top: 8px; color: #686868; }
.guides p { font-size: 13px; margin-left: -2px; }
.guide { display: grid; place-items: center; width: 32px; height: 32px; border: 1px solid #888; border-radius: 5px; background: #fff; }
.guide svg { width: 28px; height: 28px; }
.guide.large { width: 48px; height: 48px; margin: 10px 0 15px; border-radius: 7px; }
.guide.large svg { width: 32px; height: 34px; }
.guide-grid { display: grid; grid-template-columns: 32px 32px; gap: 8px; }
.guide-grid.last { margin-top: 31px; }
.faded { border-color: #ddd; opacity: .8; }
.brand { position: absolute; top: 30px; right: 28px; display: flex; flex-direction: column; align-items: flex-end; color: #4a4a4a; font-family: Roboto, sans-serif; }
.brand strong { font-size: 27px; font-weight: 500; line-height: 32px; }
.brand span { font-size: 16px; line-height: 19px; }
.docs { display: flex; justify-content: space-between; height: 25px; margin-left: 3px; border: solid #777; border-width: 1px 0 0 1px; background: #f7f7fc; }
.doc { display: flex; align-items: center; gap: 2px; height: 21px; margin-left: 3px; padding: 0 4px 0 3px; border: solid #2c5b88; border-width: 0 1px 1px; }
.doc-name { font-weight: 700; color: #2c5b88; }
.doc-nav { display: flex; gap: 6px; padding: 0 6px 3px 0; }

.status { display: flex; height: 36px; padding: 5px 0 6px; background: #2c5b88; border-bottom: 2px solid #eeeef4; color: #f5f9fd; }
.status > div { display: flex; align-items: center; border-right: 1px solid #7e9cba; }
.status .message { flex: 1; padding-left: 11px; }
.status .blank { width: 151px; }
.status .info { width: 64px; padding-left: 33px; }
.status .info .tool { gap: 6px; }
.status .kind { width: 51px; justify-content: center; }
.status .view-tools { width: 376px; justify-content: flex-end; gap: 8px; padding-right: 25px; border: 0; }
.view-tools .tool { gap: 5px; }
.view-tools .i16 { height: 18px; }
.rule { width: 1px; height: 24px; margin: 0 -3px; background: #7e9cba; }
```
FILE: scene.js
```js
// Scatter the selection dots over one pattern tile, one per grid cell.
(function () {
  var seed = 90217, step = 4, size = 96, dark = "", light = "";
  function next(n) {
    seed = (seed * 16807) % 2147483647;
    return Math.floor(seed / 2147483647 * n);
  }
  for (var y = 0; y < size; y += step) {
    for (var x = 0; x < size; x += step) {
      dark += next(3) ? "M" + (x + next(step)) + " " + (y + next(step)) + "h1v1h-1z" : "";
      light += next(4) ? "M" + (x + next(step)) + " " + (y + next(step)) + "h1v1h-1z" : "";
    }
  }
  document.getElementById("stipple-dark").setAttribute("d", dark);
  document.getElementById("stipple-light").setAttribute("d", light);
})();
```
